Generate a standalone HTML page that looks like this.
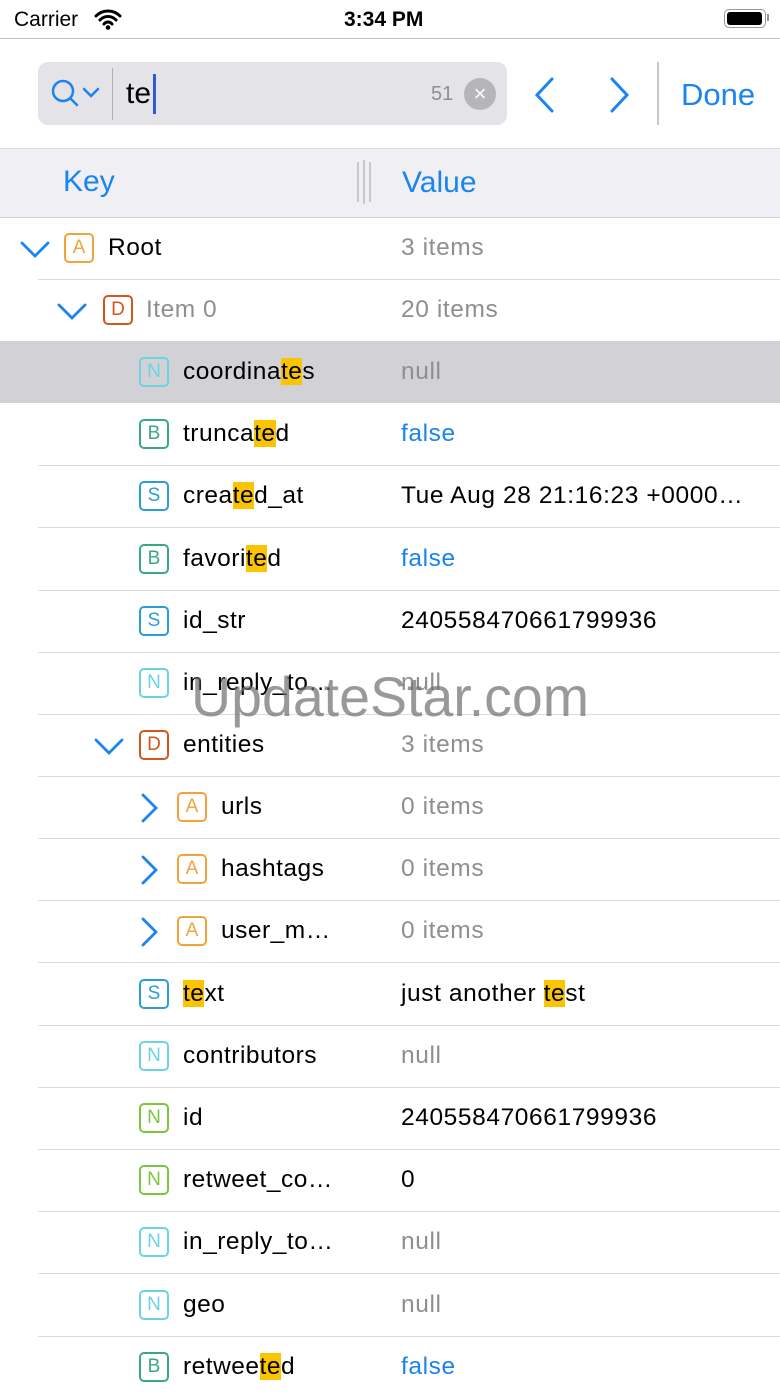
<!DOCTYPE html><html><head><style>
body{margin:0;width:780px;height:1387px;overflow:hidden;background:#fff;font-family:"Liberation Sans",sans-serif;position:relative}
.a{position:absolute}
.row{position:absolute;left:0;width:780px;height:62px}
.sep{position:absolute;left:38px;right:0;bottom:-1px;height:1px;background:#dcdcdf}
.ic{position:absolute;top:16px;width:26px;height:26px;border:2px solid;border-radius:5px;font-size:19px;text-align:center;line-height:26px}
.k{position:absolute;top:17px;font-size:24.5px;letter-spacing:0.5px;color:#000;white-space:nowrap}
.v{position:absolute;left:401px;top:17px;font-size:24.5px;letter-spacing:0.6px;color:#000;white-space:nowrap}
.g{color:#8e8e93}.b{color:#1a84f0}
.hl{background:#fbc400}
.chev{position:absolute;top:17px}
</style></head><body>
<div class="a" style="left:14px;top:8px;font-size:21px">Carrier</div>
<svg class="a" style="left:94px;top:8px" width="28" height="22" viewBox="0 0 28 22"><path d="M2 8a17 17 0 0 1 24 0M6 12a11 11 0 0 1 16 0M10 16a5 5 0 0 1 8 0" stroke="#000" stroke-width="3" fill="none" stroke-linecap="round"/><circle cx="14" cy="19.5" r="2.3"/></svg>
<div class="a" style="left:344px;top:8px;font-size:21px;font-weight:bold">3:34 PM</div>
<div class="a" style="left:724px;top:9px;width:40px;height:17px;border:1.5px solid #999;border-radius:5px"></div>
<div class="a" style="left:727px;top:12px;width:35px;height:13px;background:#000;border-radius:3px"></div>
<div class="a" style="left:767px;top:14px;width:2px;height:7px;background:#999"></div>
<div class="a" style="left:0;top:38px;width:780px;height:1px;background:#c4c4c7"></div>

<div class="a" style="left:38px;top:62px;width:469px;height:63px;background:#e4e4e8;border-radius:10px"></div>
<svg class="a" style="left:48px;top:76px" width="60" height="36" viewBox="0 0 60 36"><circle cx="15" cy="15" r="10" stroke="#1a84f0" stroke-width="2.5" fill="none"/><path d="M22 22l7 7M36 13l7 7 7-7" stroke="#1a84f0" stroke-width="2.5" fill="none" stroke-linecap="round"/></svg>
<div class="a" style="left:112px;top:68px;width:1px;height:52px;background:#b0b0b5"></div>
<div class="a" style="left:126px;top:77px;font-size:30px">te</div>
<div class="a" style="left:153px;top:74px;width:3px;height:40px;background:#2f5bd8"></div>
<div class="a" style="left:431px;top:83px;font-size:20px;color:#8e8e93">51</div>
<div class="a" style="left:464px;top:78px;width:32px;height:32px;border-radius:50%;background:#b5b5ba;color:#fff;text-align:center;line-height:31px;font-size:22px">×</div>
<svg class="a" style="left:530px;top:76px" width="100" height="38"><path d="M22 3L7 19l15 16M82 3l15 16-15 16" stroke="#1a84f0" stroke-width="3" fill="none" stroke-linecap="round"/></svg>
<div class="a" style="left:657px;top:62px;width:1.5px;height:63px;background:#c8c8cc"></div>
<div class="a" style="left:681px;top:77px;font-size:31px;color:#1a84f0">Done</div>

<div class="a" style="left:0;top:148px;width:780px;height:68px;background:#efeff4;border-top:1px solid #dcdcdf;border-bottom:1px solid #d0d0d4"></div>
<div class="a" style="left:63px;top:165px;font-size:30px;color:#1a84f0">Key</div>
<div class="a" style="left:402px;top:166px;font-size:30px;color:#1a84f0">Value</div>
<div class="a" style="left:357px;top:162px;width:2px;height:40px;background:#c8c8cc"></div>
<div class="a" style="left:363px;top:160px;width:2px;height:44px;background:#c8c8cc"></div>
<div class="a" style="left:369px;top:162px;width:2px;height:40px;background:#c8c8cc"></div>

<div class="row" style="top:217px"><svg class="chev" style="left:20px" width="30" height="30"><path d="M2 9l13 13 13-13" stroke="#1a84f0" stroke-width="2.8" fill="none" stroke-linecap="round"/></svg><div class="ic" style="left:64px;color:#f3a33a;border-color:#f3a33a">A</div><div class="k" style="left:108px">Root</div><div class="v g">3 items</div><div class="sep"></div></div>
<div class="row" style="top:279px"><svg class="chev" style="left:57px" width="30" height="30"><path d="M2 9l13 13 13-13" stroke="#1a84f0" stroke-width="2.8" fill="none" stroke-linecap="round"/></svg><div class="ic" style="left:103px;color:#d4561f;border-color:#d4561f">D</div><div class="k g" style="left:146px">Item 0</div><div class="v g">20 items</div><div class="sep"></div></div>
<div class="row" style="top:341px;background:#d1d1d6"><div class="ic" style="left:139px;color:#6bd4e3;border-color:#6bd4e3">N</div><div class="k" style="left:183px">coordina<span class="hl">te</span>s</div><div class="v g">null</div></div>
<div class="row" style="top:403px"><div class="ic" style="left:139px;color:#3aa883;border-color:#3aa883">B</div><div class="k" style="left:183px">trunca<span class="hl">te</span>d</div><div class="v b">false</div><div class="sep"></div></div>
<div class="row" style="top:465px"><div class="ic" style="left:139px;color:#2b9ed8;border-color:#2b9ed8">S</div><div class="k" style="left:183px">crea<span class="hl">te</span>d_at</div><div class="v">Tue Aug 28 21:16:23 +0000…</div><div class="sep"></div></div>
<div class="row" style="top:528px"><div class="ic" style="left:139px;color:#3aa883;border-color:#3aa883">B</div><div class="k" style="left:183px">favori<span class="hl">te</span>d</div><div class="v b">false</div><div class="sep"></div></div>
<div class="row" style="top:590px"><div class="ic" style="left:139px;color:#2b9ed8;border-color:#2b9ed8">S</div><div class="k" style="left:183px">id_str</div><div class="v">240558470661799936</div><div class="sep"></div></div>
<div class="row" style="top:652px"><div class="ic" style="left:139px;color:#6bd4e3;border-color:#6bd4e3">N</div><div class="k" style="left:183px">in_reply_to…</div><div class="v g">null</div><div class="sep"></div></div>
<div class="row" style="top:714px"><svg class="chev" style="left:94px" width="30" height="30"><path d="M2 9l13 13 13-13" stroke="#1a84f0" stroke-width="2.8" fill="none" stroke-linecap="round"/></svg><div class="ic" style="left:139px;color:#d4561f;border-color:#d4561f">D</div><div class="k" style="left:183px">entities</div><div class="v g">3 items</div><div class="sep"></div></div>
<div class="row" style="top:776px"><svg class="chev" style="left:138px" width="24" height="30"><path d="M5 2l13 13L5 28" stroke="#1a84f0" stroke-width="2.8" fill="none" stroke-linecap="round"/></svg><div class="ic" style="left:177px;color:#f3a33a;border-color:#f3a33a">A</div><div class="k" style="left:221px">urls</div><div class="v g">0 items</div><div class="sep"></div></div>
<div class="row" style="top:838px"><svg class="chev" style="left:138px" width="24" height="30"><path d="M5 2l13 13L5 28" stroke="#1a84f0" stroke-width="2.8" fill="none" stroke-linecap="round"/></svg><div class="ic" style="left:177px;color:#f3a33a;border-color:#f3a33a">A</div><div class="k" style="left:221px">hashtags</div><div class="v g">0 items</div><div class="sep"></div></div>
<div class="row" style="top:900px"><svg class="chev" style="left:138px" width="24" height="30"><path d="M5 2l13 13L5 28" stroke="#1a84f0" stroke-width="2.8" fill="none" stroke-linecap="round"/></svg><div class="ic" style="left:177px;color:#f3a33a;border-color:#f3a33a">A</div><div class="k" style="left:221px">user_m…</div><div class="v g">0 items</div><div class="sep"></div></div>
<div class="row" style="top:963px"><div class="ic" style="left:139px;color:#2b9ed8;border-color:#2b9ed8">S</div><div class="k" style="left:183px"><span class="hl">te</span>xt</div><div class="v">just another <span class="hl">te</span>st</div><div class="sep"></div></div>
<div class="row" style="top:1025px"><div class="ic" style="left:139px;color:#6bd4e3;border-color:#6bd4e3">N</div><div class="k" style="left:183px">contributors</div><div class="v g">null</div><div class="sep"></div></div>
<div class="row" style="top:1087px"><div class="ic" style="left:139px;color:#7cc63f;border-color:#7cc63f">N</div><div class="k" style="left:183px">id</div><div class="v">240558470661799936</div><div class="sep"></div></div>
<div class="row" style="top:1149px"><div class="ic" style="left:139px;color:#7cc63f;border-color:#7cc63f">N</div><div class="k" style="left:183px">retweet_co…</div><div class="v">0</div><div class="sep"></div></div>
<div class="row" style="top:1211px"><div class="ic" style="left:139px;color:#6bd4e3;border-color:#6bd4e3">N</div><div class="k" style="left:183px">in_reply_to…</div><div class="v g">null</div><div class="sep"></div></div>
<div class="row" style="top:1274px"><div class="ic" style="left:139px;color:#6bd4e3;border-color:#6bd4e3">N</div><div class="k" style="left:183px">geo</div><div class="v g">null</div><div class="sep"></div></div>
<div class="row" style="top:1336px"><div class="ic" style="left:139px;color:#3aa883;border-color:#3aa883">B</div><div class="k" style="left:183px">retwee<span class="hl">te</span>d</div><div class="v b">false</div></div>

<div class="a" style="left:191px;top:665px;font-size:55.5px;color:rgba(110,110,110,0.7);white-space:nowrap">UpdateStar.com</div>
</body></html>
